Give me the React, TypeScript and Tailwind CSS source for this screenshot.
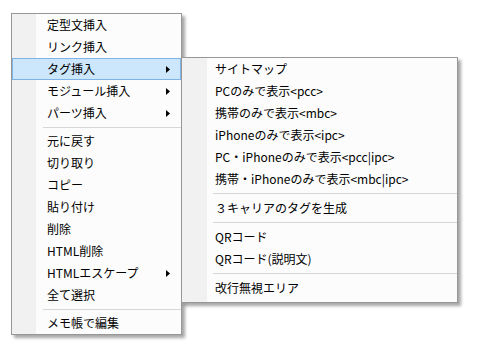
import React from 'react'

type Item = { label: string; arrow?: boolean; active?: boolean } | 'sep'

const mainItems: Item[] = [
  { label: '定型文挿入' },
  { label: 'リンク挿入' },
  { label: 'タグ挿入', arrow: true, active: true },
  { label: 'モジュール挿入', arrow: true },
  { label: 'パーツ挿入', arrow: true },
  'sep',
  { label: '元に戻す' },
  { label: '切り取り' },
  { label: 'コピー' },
  { label: '貼り付け' },
  { label: '削除' },
  { label: 'HTML削除' },
  { label: 'HTMLエスケープ', arrow: true },
  { label: '全て選択' },
  'sep',
  { label: 'メモ帳で編集' },
]

const tagItems: Item[] = [
  { label: 'サイトマップ' },
  { label: 'PCのみで表示<pcc>' },
  { label: '携帯のみで表示<mbc>' },
  { label: 'iPhoneのみで表示<ipc>' },
  { label: 'PC・iPhoneのみで表示<pcc|ipc>' },
  { label: '携帯・iPhoneのみで表示<mbc|ipc>' },
  'sep',
  { label: '３キャリアのタグを生成' },
  'sep',
  { label: 'QRコード' },
  { label: 'QRコード(説明文)' },
  'sep',
  { label: '改行無視エリア' },
]

const font = { fontFamily: '"Noto Sans CJK JP", "Noto Sans", sans-serif' }

function Arrow() {
  return (
    <svg width="4" height="7" viewBox="0 0 4 7" className="block">
      <path d="M0 0 L4 3.5 L0 7 Z" fill="#000" />
    </svg>
  )
}

function MenuList({ items, sepClass, textClass }: { items: Item[]; sepClass: string; textClass: string }) {
  return (
    <>
      {items.map((it, i) =>
        it === 'sep' ? (
          <div key={i} className={`flex items-center ${sepClass}`}>
            <div className="ml-[31px] h-px flex-1 bg-[#d7d7d7]" />
          </div>
        ) : (
          <div
            key={i}
            className={`flex h-[22px] items-center border ${
              it.active ? 'border-[#7db3e6] bg-[#cce6fb]' : 'border-transparent'
            }`}
          >
            <span className={`flex-1 whitespace-nowrap text-[12px] leading-none text-black ${textClass}`}>
              {it.label}
            </span>
            {it.arrow && (
              <span className="mr-[10px]">
                <Arrow />
              </span>
            )}
          </div>
        )
      )}
    </>
  )
}

export default function App() {
  return (
    <div className="relative h-[352px] w-[492px] overflow-hidden bg-white" style={font}>
      <div className="ml-[11px] mt-[13px] w-[171px] border border-[#979797] bg-[linear-gradient(to_right,#f1f1f1_0,#f1f1f1_24px,#fcfcfc_24px)] shadow-[3px_3px_3px_rgba(0,0,0,0.35)]">
        <MenuList items={mainItems} sepClass="h-[6px]" textClass="pl-[34px]" />
      </div>

      <div className="absolute left-[181px] top-[57px] w-[277px] border border-[#979797] bg-[linear-gradient(to_right,#f1f1f1_0,#f1f1f1_25px,#fcfcfc_25px)] pb-[3px] shadow-[3px_3px_3px_rgba(0,0,0,0.35)]">
        <MenuList items={tagItems} sepClass="h-[7px]" textClass="pl-[32px]" />
      </div>
    </div>
  )
}
